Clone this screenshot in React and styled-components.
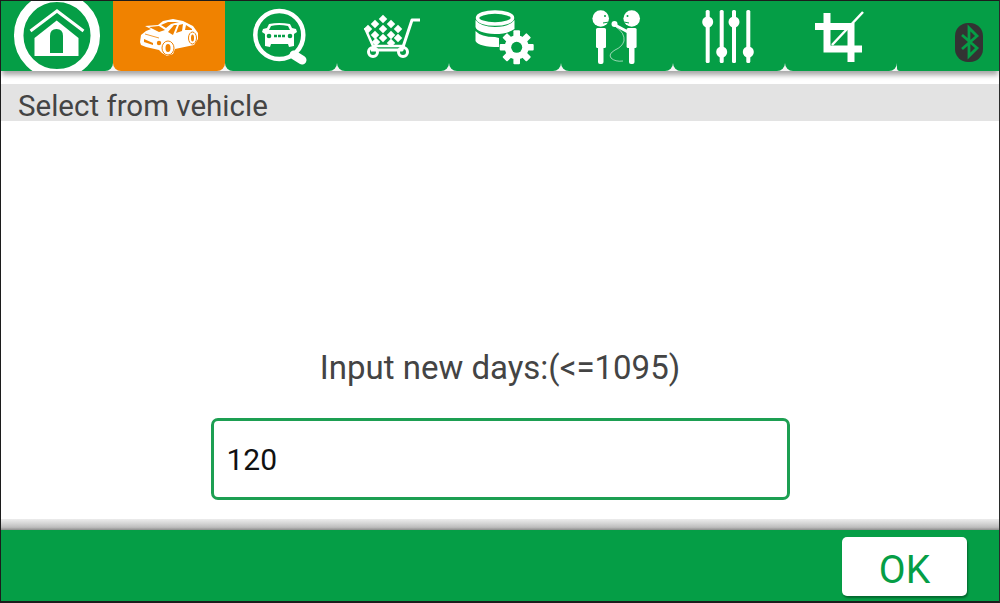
import React from 'react';
import styled, { createGlobalStyle } from 'styled-components';

const GREEN = '#059e46';
const ORANGE = '#f08200';

const GlobalStyle = createGlobalStyle`
  html, body {
    margin: 0;
    padding: 0;
    background: #fff;
    font-family: Roboto, "Liberation Sans", sans-serif;
  }
`

const Screen = styled.div`
  box-sizing: border-box;
  width: 1000px;
  height: 603px;
  border-top: 1px solid #1c1c1c;
  border-left: 1px solid #1c1c1c;
  border-right: 1px solid #2a2a2a;
  border-bottom: 2px solid #1c1c1c;
  display: flex;
  flex-direction: column;
  background: #fff;
  overflow: hidden;
`

const TabBar = styled.div`
  display: flex;
  height: 70px;
  flex: none;
  box-shadow: 0 5px 5px -1px rgba(0, 0, 0, 0.35);
  position: relative;
  background: #f4f4f4;
`

const Tab = styled.div`
  width: 112px;
  height: 70px;
  flex: none;
  background: ${p => (p.$active ? ORANGE : GREEN)};
  border-radius: ${p => (p.$first ? '0 0 8px 0' : '0 0 8px 8px')};
  overflow: hidden;
  svg {
    display: block;
  }
`

const TabFiller = styled.div`
  flex: 1;
  background: ${GREEN};
  border-bottom-left-radius: 3px;
  display: flex;
  align-items: flex-start;
  justify-content: flex-end;
  padding: 22px 16px 0 0;
`

const TitleBar = styled.div`
  box-sizing: border-box;
  margin-top: 13px;
  height: 37px;
  flex: none;
  background: #e3e3e3;
  color: #444;
  font-size: 29.5px;
  line-height: 29px;
  padding: 8px 0 0 17px;
`

const Body = styled.div`
  flex: 1;
  display: flex;
  flex-direction: column;
  align-items: center;
  justify-content: flex-end;
  padding-bottom: 19px;
`

const Prompt = styled.div`
  color: #444;
  font-size: 33px;
  line-height: 36px;
  margin-bottom: 32px;
`

const DaysInput = styled.div`
  box-sizing: border-box;
  width: 579px;
  height: 82px;
  border: 3px solid #1d9f52;
  border-radius: 7px;
  padding-left: 13px;
  font-size: 30px;
  line-height: 78px;
  color: #111;
`

const ShadowStrip = styled.div`
  height: 11px;
  flex: none;
  background: linear-gradient(#ececec, #d8d8d8 35%, #bdbdbd 75%, #8d8d8d);
`

const Footer = styled.div`
  height: 71px;
  flex: none;
  background: ${GREEN};
  display: flex;
  align-items: center;
  justify-content: flex-end;
  padding: 1px 32px 0 0;
  box-sizing: border-box;
`

const OkButton = styled.button`
  width: 125px;
  height: 59px;
  border: none;
  border-radius: 5px;
  background: #fff;
  color: ${GREEN};
  font-family: inherit;
  font-size: 39px;
  padding: 8px 0 0;
  box-shadow: 1px 2px 2px rgba(0, 0, 0, 0.35);
`

const TabIcon = ({ children }) => (
  <svg width="112" height="70" viewBox="0 1 112 70">{children}</svg>
);

const HomeIcon = () => (
  <TabIcon>
    <circle cx="56" cy="35.500" r="38.300" fill="none" stroke="#fff" strokeWidth="9.500" />
    <path d="M29.500 31 L56 11 L82.500 31" fill="none" stroke="#fff" strokeWidth="3" />
    <path d="M33.500 38 L33.500 56 L77.500 56 L77.500 38 L55.700 20.500 Z" fill="#fff" />
    <path d="M49 53 L49 36 Q49 29 55.500 29 Q62 29 62 36 L62 53 Z" fill={GREEN} />
  </TabIcon>
);

const CarIcon = () => (
  <TabIcon>
    <path d="M27 42 L28 35 L33 31 L38 29 L32 26 L45 25 L50 21 L60 19 L70 21 L80 26 L85 33 L85 39 L81 45 L62 49 L60 54 L54 56 L49 53 L46 50 L33 47 L28 45 Z" fill="#fff" />
    <path d="M36 27 L46 26 L52 30 L46 32 Z" fill={ORANGE} />
    <path d="M48 25 L55 22 L66 22 L58 24 L53 28 Z" fill={ORANGE} />
    <path d="M55 32 L61 25 L64 25 L60 35 Z" fill={ORANGE} />
    <path d="M63 33 L66 25 L70 24 L69 31 Z" fill={ORANGE} />
    <path d="M72 30 L73 25 L79 29 L79 30 Z" fill={ORANGE} />
    <path d="M31 39 L40 43 L40 45 L31 42 Z" fill={ORANGE} />
    <path d="M32 34 L46 38" stroke={ORANGE} strokeWidth="0.800" />
    <circle cx="46" cy="43" r="2.200" fill={ORANGE} />
    <ellipse cx="55" cy="48" rx="6" ry="7" fill="#fff" stroke={ORANGE} strokeWidth="1" />
    <ellipse cx="55" cy="48" rx="2.500" ry="4" fill={ORANGE} />
    <ellipse cx="79.500" cy="38" rx="4" ry="6" fill="#fff" stroke={ORANGE} strokeWidth="1" />
    <ellipse cx="79.500" cy="38" rx="1.500" ry="3.500" fill={ORANGE} />
  </TabIcon>
);

const SearchCarIcon = () => (
  <TabIcon>
    <circle cx="54.300" cy="35" r="24" fill="none" stroke="#fff" strokeWidth="4.500" />
    <path d="M69 55 L77 60" stroke="#fff" strokeWidth="9" strokeLinecap="round" />
    <path d="M42 28 L44 24 Q54 22 65 24 L67 28 L71 29 L72 32 L69 34 L69 46 L64 47 L63 44 L46 44 L45 47 L40 46 L40 34 L37 32 L38 29 Z" fill="#fff" />
    <path d="M44 30 L46 26 Q54 24 63 26 L65 30 Z" fill={GREEN} />
    <circle cx="44" cy="36" r="2.300" fill={GREEN} />
    <circle cx="65" cy="36" r="2.300" fill={GREEN} />
    <path d="M49 36 H60" stroke={GREEN} strokeWidth="2.500" strokeDasharray="3 1" />
  </TabIcon>
);

const CartIcon = () => {
  const cubes = [
    [46, 19], [38, 24], [54, 24], [46, 29], [61, 29], [31, 29],
    [38, 35], [54, 35], [46, 38], [61, 38], [39, 42], [54, 43],
  ];
  return (
    <TabIcon>
      <path d="M83 20 L75 20 L65 50 L34 50" fill="none" stroke="#fff" strokeWidth="3" strokeLinejoin="round" />
      <path d="M28 28 L36 46 L68 46" fill="none" stroke="#fff" strokeWidth="2.500" />
      <circle cx="36" cy="52" r="4.500" fill="none" stroke="#fff" strokeWidth="3" />
      <circle cx="66" cy="52" r="4.500" fill="none" stroke="#fff" strokeWidth="3" />
      {cubes.map(([x, y], key) =>
        <rect key={key} x={x - 3} y={y - 3} width="6" height="6" fill="#fff" transform={`rotate(45 ${x} ${y})`} />
      )}
    </TabIcon>
  );
};

const DataGearIcon = () => (
  <TabIcon>
    <ellipse cx="46" cy="18" rx="17.500" ry="6" fill="none" stroke="#fff" strokeWidth="3.500" />
    <path d="M26.500 20 L26.500 27 Q28 33 46 34 Q58 34 65.500 29 L65.500 20 Q60 27 46 27 Q32 27 26.500 20 Z" fill="#fff" />
    <path d="M26.500 31 L26.500 41 Q30 47 50 47 L50 38 L46 37 Q32 37 26.500 31 Z" fill="#fff" />
    <g transform="translate(67.700 47.300)">
      <circle r="12" fill="#fff" />
      {[0, 45, 90, 135].map(angle =>
        <rect key={angle} x="-3.300" y="-17" width="6.600" height="34" rx="1" fill="#fff" transform={`rotate(${angle})`} />
      )}
      <circle r="5.500" fill={GREEN} />
    </g>
  </TabIcon>
);

const PeopleIcon = () => (
  <TabIcon>
    <circle cx="39.700" cy="18.500" r="8.300" fill="#fff" />
    <circle cx="44" cy="16" r="1" fill={GREEN} />
    <path d="M42 23 L48 22" stroke={GREEN} strokeWidth="1" />
    <rect x="35" y="28" width="10" height="20" rx="1.500" fill="#fff" />
    <rect x="37" y="46" width="5.500" height="18" rx="2" fill="#fff" />
    <circle cx="70.700" cy="18.500" r="8.300" fill="#fff" />
    <circle cx="66.500" cy="16" r="1" fill={GREEN} />
    <path d="M68 23 L63 22" stroke={GREEN} strokeWidth="1" />
    <rect x="65.600" y="28" width="10" height="20" rx="1.500" fill="#fff" />
    <rect x="68" y="46" width="5.500" height="18" rx="2" fill="#fff" />
    <path d="M67 32 L54 25" stroke="#fff" strokeWidth="3" />
    <circle cx="53.500" cy="24" r="3" fill="#fff" />
    <path d="M55 27 Q64 33 63 41 Q61 47 54 50 Q47 54 50 58 Q54 62 62 61" fill="none" stroke="#fff" strokeWidth="0.600" />
  </TabIcon>
);

const SlidersIcon = () => {
  const sliders = [[34.7, 22], [48.7, 52], [61, 22], [75.3, 52]];
  return (
    <TabIcon>
      {sliders.map(([x, y]) =>
        <g key={x}>
          <rect x={x - 2} y="10" width="4" height="53" rx="1.500" fill="#fff" />
          <circle cx={x} cy={y} r="5.500" fill="#fff" />
        </g>
      )}
    </TabIcon>
  );
};

const CropIcon = () => (
  <TabIcon>
    <path d="M30 26.500 H66 V62 M42 13 V49 H77" fill="none" stroke="#fff" strokeWidth="7" />
    <path d="M47 45 L78 12" stroke="#fff" strokeWidth="2.500" />
  </TabIcon>
);

const BluetoothBadge = () => (
  <svg width="28" height="39" viewBox="0 0 28 39">
    <rect width="28" height="39" rx="13" fill="#333" />
    <path d="M7 12 L22 25 L14 33 L14 5 L22 13 L7 26" fill="none" stroke={GREEN} strokeWidth="2.800" />
  </svg>
);

const tabs = [
  { Icon: HomeIcon },
  { Icon: CarIcon, active: true },
  { Icon: SearchCarIcon },
  { Icon: CartIcon },
  { Icon: DataGearIcon },
  { Icon: PeopleIcon },
  { Icon: SlidersIcon },
  { Icon: CropIcon },
];

const App = () => {
  return (
    <Screen>
      <GlobalStyle />
      <TabBar>
        {tabs.map(({ Icon, active }, key) =>
          <Tab key={key} $active={active} $first={key === 0}>
            <Icon />
          </Tab>
        )}
        <TabFiller>
          <BluetoothBadge />
        </TabFiller>
      </TabBar>
      <TitleBar>Select from vehicle</TitleBar>
      <Body>
        <Prompt>Input new days:(&lt;=1095)</Prompt>
        <DaysInput>120</DaysInput>
      </Body>
      <ShadowStrip />
      <Footer>
        <OkButton>OK</OkButton>
      </Footer>
    </Screen>
  )
}

export default App;
